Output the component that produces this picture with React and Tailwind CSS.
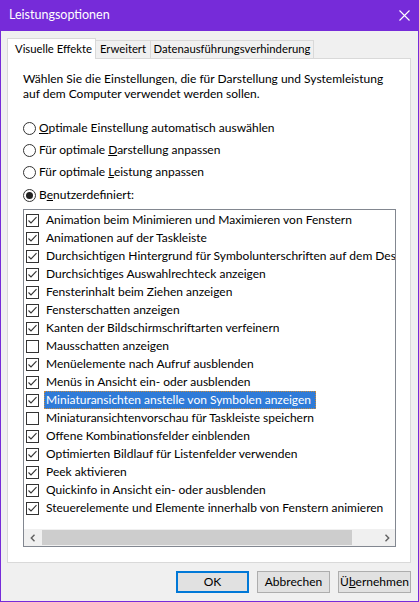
import React from 'react';

const items = [
  { label: 'Animation beim Minimieren und Maximieren von Fenstern', checked: true },
  { label: 'Animationen auf der Taskleiste', checked: true },
  { label: 'Durchsichtigen Hintergrund für Symbolunterschriften auf dem Desktop verwenden', checked: true },
  { label: 'Durchsichtiges Auswahlrechteck anzeigen', checked: true },
  { label: 'Fensterinhalt beim Ziehen anzeigen', checked: true },
  { label: 'Fensterschatten anzeigen', checked: true },
  { label: 'Kanten der Bildschirmschriftarten verfeinern', checked: true },
  { label: 'Mausschatten anzeigen', checked: false },
  { label: 'Menüelemente nach Aufruf ausblenden', checked: true },
  { label: 'Menüs in Ansicht ein- oder ausblenden', checked: true },
  { label: 'Miniaturansichten anstelle von Symbolen anzeigen', checked: true, selected: true },
  { label: 'Miniaturansichtenvorschau für Taskleiste speichern', checked: false },
  { label: 'Offene Kombinationsfelder einblenden', checked: true },
  { label: 'Optimierten Bildlauf für Listenfelder verwenden', checked: true },
  { label: 'Peek aktivieren', checked: true },
  { label: 'Quickinfo in Ansicht ein- oder ausblenden', checked: true },
  { label: 'Steuerelemente und Elemente innerhalb von Fenstern animieren', checked: true },
];

function CheckBox({ checked }) {
  return (
    <svg width="13" height="13" viewBox="0 0 13 13" className="shrink-0">
      <rect x="0.5" y="0.5" width="12" height="12" fill="#fff" stroke="#333" />
      {checked && <path d="M2.5 6.5 L5 9 L10.5 3.2" fill="none" stroke="#333" strokeWidth="1.1" />}
    </svg>
  );
}

function Radio({ checked }) {
  return (
    <svg width="13" height="13" viewBox="0 0 13 13" className="shrink-0">
      <circle cx="6.5" cy="6.5" r="6" fill="#fff" stroke="#333" />
      {checked && <circle cx="6.5" cy="6.5" r="3.5" fill="#222" />}
    </svg>
  );
}

function RadioRow({ checked, children, extra = '' }) {
  return (
    <div className={`h-[22px] flex items-center gap-[3px] ${extra}`}>
      <Radio checked={checked} />
      <span>{children}</span>
    </div>
  );
}

export default function App() {
  return (
    <div className="w-[419px] h-[602px] bg-[#f0f0f0] border-x border-b border-[#762bd9] flex flex-col font-['Lato',sans-serif] text-[12px] text-black overflow-hidden">
      <div className="h-[31px] shrink-0 bg-[#762bd9] text-white flex items-center justify-between pl-[8px] pr-[8px]">
        <span className="text-[12.5px]">Leistungsoptionen</span>
        <svg width="11" height="11" viewBox="0 0 11 11">
          <path d="M0.5 0.5 L10.5 10.5 M10.5 0.5 L0.5 10.5" stroke="#fff" strokeWidth="1.1" />
        </svg>
      </div>

      <div className="flex-1 flex flex-col pl-[6px] pt-[7px]">
        <div className="flex items-end h-[20px] whitespace-nowrap text-[11.3px]">
          <div className="w-[89px] shrink-0 h-[21px] -mb-px relative z-10 bg-white border border-b-0 border-[#d9d9d9] pl-[7px] flex items-center">
            Visuelle Effekte
          </div>
          <div className="w-[56px] shrink-0 h-[18px] -ml-px bg-[#f0f0f0] border border-b-0 border-[#d9d9d9] flex items-center justify-center">
            Erweitert
          </div>
          <div className="w-[164px] shrink-0 h-[18px] -ml-px bg-[#f0f0f0] border border-b-0 border-[#d9d9d9] flex items-center justify-center">
            Datenausführungsverhinderung
          </div>
        </div>

        <div className="w-[404px] h-[505px] bg-white border border-[#d9d9d9] pl-[15px] pt-[12px] flex flex-col">
          <p className="leading-[15px]">
            Wählen Sie die Einstellungen, die für Darstellung und Systemleistung
            <br />
            auf dem Computer verwendet werden sollen.
          </p>

          <div className="mt-[16px] flex flex-col">
            <RadioRow checked={false}>
              <span className="underline">O</span>ptimale Einstellung automatisch auswählen
            </RadioRow>
            <RadioRow checked={false}>
              Für optimale <span className="underline">D</span>arstellung anpassen
            </RadioRow>
            <RadioRow checked={false}>
              Für optimale <span className="underline">L</span>eistung anpassen
            </RadioRow>
            <RadioRow checked={true} extra="mt-[1px]">
              B<span className="underline">e</span>nutzerdefiniert:
            </RadioRow>
          </div>

          <div className="mt-[3px] w-[373px] h-[338px] border border-[#828790] flex flex-col overflow-hidden">
            <div className="flex-1 pt-[1px] overflow-hidden">
              {items.map((it) => (
                <div key={it.label} className="h-[18px] flex items-center pl-[2px] whitespace-nowrap">
                  <CheckBox checked={it.checked} />
                  <span
                    className={
                      it.selected
                        ? 'ml-[5px] h-[18px] pl-[1px] pr-[4px] flex items-center bg-[#2f7bd8] text-white border border-dotted border-[#c58a3e]'
                        : 'ml-[5px] h-[18px] pl-[2px] pr-[2px] flex items-center'
                    }
                  >
                    {it.label}
                  </span>
                </div>
              ))}
            </div>
            <div className="h-[17px] shrink-0 bg-[#f0f0f0] flex">
              <div className="w-[17px] flex items-center justify-center">
                <svg width="6" height="8" viewBox="0 0 6 8">
                  <path d="M4.5 0.8 L1.3 4 L4.5 7.2" fill="none" stroke="#606060" strokeWidth="1.4" />
                </svg>
              </div>
              <div className="ml-px w-[310px] my-[1px] bg-[#cdcdcd]" />
              <div className="flex-1" />
              <div className="w-[17px] flex items-center justify-center">
                <svg width="6" height="8" viewBox="0 0 6 8">
                  <path d="M1.5 0.8 L4.7 4 L1.5 7.2" fill="none" stroke="#606060" strokeWidth="1.4" />
                </svg>
              </div>
            </div>
          </div>
        </div>

        <div className="w-[404px] mt-[8px] flex justify-end gap-[8px]">
          <button className="w-[73px] h-[22px] bg-[#e1e1e1] border-2 border-[#0078d7] flex items-center justify-center">
            OK
          </button>
          <button className="w-[73px] h-[22px] bg-[#e1e1e1] border border-[#adadad] flex items-center justify-center">
            Abbrechen
          </button>
          <button className="w-[73px] h-[22px] bg-[#e1e1e1] border border-[#adadad] flex items-center justify-center">
            Ü<span className="underline">b</span>ernehmen
          </button>
        </div>
      </div>
    </div>
  );
}
